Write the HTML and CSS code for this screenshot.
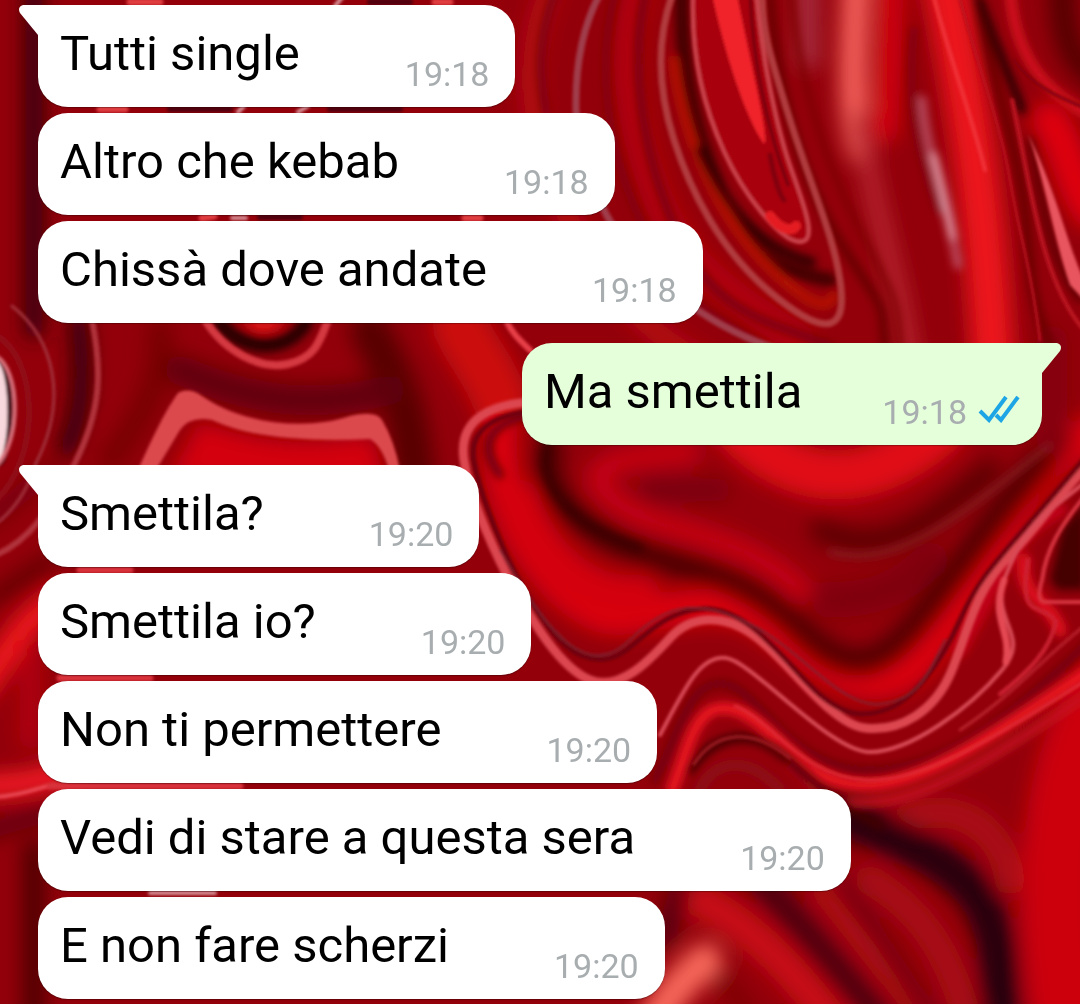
FILE: index.html
```html
<!DOCTYPE html>
<html lang="it">
<head>
<meta charset="utf-8">
<meta name="viewport" content="width=device-width, initial-scale=1">
<title>Chat</title>
<link rel="stylesheet" href="styles.css">
</head>
<body>
<svg class="wallpaper" viewBox="0 0 1080 1004" preserveAspectRatio="xMidYMid slice" aria-hidden="true">
  <defs>
    <filter id="soft" x="-20%" y="-20%" width="140%" height="140%"><feGaussianBlur stdDeviation="10"/></filter>
    <filter id="mid" x="-20%" y="-20%" width="140%" height="140%"><feGaussianBlur stdDeviation="4"/></filter>
    <filter id="fine" x="-20%" y="-20%" width="140%" height="140%"><feGaussianBlur stdDeviation="1.5"/></filter>
  </defs>
  <rect width="1080" height="1004" fill="#93000a"/>

  <!-- broad folds -->
  <g filter="url(#soft)" fill="none" stroke-linecap="round">
    <path d="M550 -10C520 60 530 130 560 200S640 330 700 360" stroke="#b80812" stroke-width="20"/>
    <path d="M640 -10C620 50 630 120 655 190S720 290 800 340" stroke="#b40010" stroke-width="30"/>
    <path d="M34 -10V330" stroke="#2c000a" stroke-width="18"/>
    <path d="M808 -20V60" stroke="#a83044" stroke-width="20"/>
    <path d="M858 -40C852 60 850 110 862 150" stroke="#f4605a" stroke-width="28"/>
    <path d="M892 -40C890 60 888 90 886 130" stroke="#d40008" stroke-width="24"/>
    <path d="M862 120C870 210 900 270 912 380" stroke="#b82832" stroke-width="18"/>
    <path d="M940 -40C965 90 985 180 995 400" stroke="#ec141c" stroke-width="42"/>
    <path d="M1062 -30C1060 40 1070 70 1120 90" stroke="#520006" stroke-width="26"/>
    <path d="M1050 120C1070 150 1070 180 1090 210" stroke="#e00008" stroke-width="36"/>
    <path d="M78 320C84 370 84 410 66 450" stroke="#24000c" stroke-width="16"/>
    <path d="M160 330C165 380 140 420 110 460" stroke="#780006" stroke-width="26"/>
    <path d="M370 330C390 370 410 400 415 480" stroke="#580006" stroke-width="40"/>
    <path d="M180 370C250 400 310 410 390 390" stroke="#600008" stroke-width="30"/>
    <path d="M460 325C470 350 490 370 500 400" stroke="#cc080e" stroke-width="56"/>
    <path d="M168 480L200 422C260 444 310 446 372 436L388 490Z" fill="#d4000c"/>
    <path d="M500 430C495 530 560 600 600 615S710 580 770 625S850 690 890 680S960 600 1010 520S1060 460 1110 420" stroke="#dc040c" stroke-width="34"/>
    <path d="M520 500C540 560 590 600 640 595" stroke="#d4040c" stroke-width="40"/>
    <path d="M550 445C535 500 590 535 650 555S750 580 800 630S880 670 920 620S1000 510 1060 440" stroke="#4a0004" stroke-width="26"/>
    <path d="M690 452C590 458 580 475 620 505S740 530 800 590" stroke="#c80414" stroke-width="22"/>
    <path d="M650 490H720" stroke="#780008" stroke-width="22"/>
    <path d="M740 430C800 490 870 490 940 430" stroke="#e00812" stroke-width="50"/>
    <path d="M820 530C880 560 930 525 990 470" stroke="#580004" stroke-width="22"/>
    <path d="M830 600C870 600 900 590 930 560" stroke="#80000a" stroke-width="36"/>
    <path d="M1120 680C1050 760 1050 920 1075 1040" stroke="#cc000c" stroke-width="76"/>
    <path d="M900 820C950 800 1000 820 1010 880" stroke="#aa1018" stroke-width="30"/>
    <path d="M840 815C900 840 965 865 985 910S995 970 1005 1040" stroke="#28000a" stroke-width="38"/>
    <path d="M870 880C920 910 950 950 970 1030" stroke="#a80814" stroke-width="30"/>
    <path d="M740 860C790 910 830 960 890 1030" stroke="#4c0010" stroke-width="26"/>
    <path d="M820 890L930 1030" stroke="#b00812" stroke-width="20"/>
    <path d="M845 885L940 1030" stroke="#680008" stroke-width="14"/>
    <path d="M700 900C760 930 800 980 840 1030" stroke="#c80c18" stroke-width="34"/>
    <path d="M700 960C725 980 745 1000 760 1040" stroke="#7a0006" stroke-width="16"/>
    <path d="M650 1030C670 990 685 980 705 960" stroke="#f8685a" stroke-width="34"/>
    <path d="M680 890L664 940" stroke="#500008" stroke-width="20"/>
    <path d="M-20 690C10 650 20 620 60 600" stroke="#f0161e" stroke-width="26"/>
    <path d="M-10 520L50 470" stroke="#740010" stroke-width="18"/>
    <path d="M-10 600L50 560" stroke="#600006" stroke-width="16"/>
    <path d="M30 650V740" stroke="#b4000a" stroke-width="20"/>
    <path d="M-20 786C20 786 40 780 80 770" stroke="#f81c26" stroke-width="22"/>
    <path d="M-20 834L60 810" stroke="#600008" stroke-width="18"/>
    <path d="M34 850V1030" stroke="#4c0006" stroke-width="22"/>
    <path d="M1052 340V440" stroke="#840008" stroke-width="30"/>
  </g>

  <!-- medium folds -->
  <g filter="url(#mid)" fill="none" stroke-linecap="round">
    <path d="M556 -10C536 40 540 80 546 112" stroke="#7a0010" stroke-width="8"/>
    <path d="M616 -10C596 60 605 150 645 230S710 310 760 345" stroke="#80000a" stroke-width="8"/>
    <path d="M646 -10C630 60 640 150 676 230S760 320 830 345" stroke="#76000a" stroke-width="8"/>
    <path d="M682 -10C680 60 690 120 720 190S780 270 830 280" stroke="#420006" stroke-width="14"/>
    <path d="M674 60C684 140 720 220 770 268S830 305 834 296" stroke="#b81404" stroke-width="9"/>
    <path d="M700 150C725 205 760 250 812 262" stroke="#2a0006" stroke-width="9"/>
    <path d="M770 -10C775 80 800 180 845 250S880 300 885 345" stroke="#680006" stroke-width="9"/>
    <path d="M790 -10C800 80 820 150 860 230S896 300 900 345" stroke="#7c0008" stroke-width="6"/>
    <path d="M914 30C906 110 920 160 938 210" stroke="#80000c" stroke-width="8"/>
    <path d="M922 100C926 150 944 190 958 265" stroke="#b84a5c" stroke-width="9"/>
    <path d="M934 156C942 186 950 220 953 236" stroke="#e098a4" stroke-width="7"/>
    <path d="M978 -10C986 60 1012 130 1022 190S1026 290 1050 345" stroke="#6a0006" stroke-width="10"/>
    <path d="M980 0C1000 60 1018 95 1022 110" stroke="#200004" stroke-width="8"/>
    <path d="M1030 140C1044 210 1050 260 1080 300" stroke="#500006" stroke-width="6"/>
    <path d="M1010 -10C1014 50 1040 90 1090 115" stroke="#dc1420" stroke-width="9"/>
    <path d="M220 323C240 350 285 356 306 323" stroke="#260006" stroke-width="14"/>
    <path d="M240 320Q264 344 288 320Z" fill="#e01414"/>
    <path d="M500 475C478 445 488 424 530 414" stroke="#600008" stroke-width="8"/>
    <path d="M548 445C536 490 580 530 640 548" stroke="#380004" stroke-width="8"/>
    <path d="M830 552C900 570 960 515 1050 445" stroke="#8c2028" stroke-width="5"/>
    <path d="M1085 500L1062 530L1050 580L1058 590H1085Z" fill="#440006"/>
    <path d="M960 650C975 620 990 595 1000 570S1040 520 1060 510" stroke="#c00414" stroke-width="14"/>
    <path d="M1024 560C1020 600 1050 600 1060 630" stroke="#dc101c" stroke-width="14"/>
    <path d="M1090 640C1030 700 950 770 870 770S760 690 725 684S680 730 655 780" stroke="#700008" stroke-width="8"/>
    <path d="M1090 670C1010 722 930 785 865 785S775 722 735 710S690 745 672 790" stroke="#f01824" stroke-width="11"/>
    <path d="M1100 686C1020 740 930 802 870 802S820 785 790 765" stroke="#c81822" stroke-width="8"/>
    <path d="M690 770C715 732 752 730 780 752S830 800 880 826" stroke="#400006" stroke-width="10"/>
    <path d="M700 790C715 758 750 756 780 790" stroke="#8c0818" stroke-width="12"/>
  </g>

  <!-- thin highlights -->
  <g filter="url(#fine)" fill="none" stroke-linecap="round">
    <path d="M602 -10C585 20 575 60 576 110C580 160 600 210 622 240S700 325 780 350" stroke="#a03c4c" stroke-width="7"/>
    <path d="M674 -10C655 40 658 90 674 140S720 250 770 292S846 336 841 288S812 190 790 120S762 30 762 -10" stroke="#b03a3c" stroke-width="7"/>
    <path d="M693 -10C690 60 705 110 724 152S780 242 800 242S802 200 790 165S762 60 756 -10Z" fill="#a8040e" stroke="#cc444e" stroke-width="4"/>
    <path d="M711 -10C724 50 744 115 764 144C770 140 752 70 736 -10Z" fill="#f0202a"/>
    <path d="M750 -10C752 60 768 130 788 185" stroke="#700008" stroke-width="3"/>
    <path d="M770 216C780 230 792 232 796 226" stroke="#e41c24" stroke-width="10"/>
    <path d="M770 155C774 180 782 200 784 200" stroke="#800010" stroke-width="5"/>
    <path d="M932 -10C950 60 970 110 985 170" stroke="#f03038" stroke-width="4"/>
    <path d="M958 -10C975 60 1000 120 1010 180S1030 260 1040 340" stroke="#b8101c" stroke-width="3"/>
    <path d="M1028 134C1045 180 1054 240 1070 285L1084 300V280C1068 246 1056 190 1028 134Z" fill="#e8545e"/>
    <path d="M1012 100C1030 180 1040 280 1084 330" stroke="#bc1420" stroke-width="4"/>
    <path d="M1014 60C1030 85 1060 98 1090 110" stroke="#800008" stroke-width="3"/>

    <ellipse cx="-2" cy="412" rx="12" ry="52" fill="#f8d8dc" stroke="#3c0814" stroke-width="5"/>
    <path d="M-4 356C20 370 22 440 -4 466" stroke="#d8707a" stroke-width="4"/>
    <path d="M-4 335C40 360 40 460 -4 500" stroke="#900c18" stroke-width="6"/>
    <path d="M12 306C55 340 68 400 36 463C28 490 14 510 -4 524" stroke="#a0303a" stroke-width="3"/>
    <path d="M92 320C102 370 102 410 74 465C50 510 30 540 -4 555" stroke="#b0303a" stroke-width="6"/>
    <path d="M205 320C225 352 260 370 288 364S320 340 328 320" stroke="#d43840" stroke-width="8"/>
    <path d="M138 470C155 432 166 410 178 393Q189 387 202 396C245 426 310 430 350 416Q376 410 382 420Q394 440 400 470L389 470Q382 446 370 439C310 442 250 438 212 420Q190 416 180 430L156 470Z" fill="#dc484e"/>
    <path d="M506 320C512 334 522 342 530 350" stroke="#e84048" stroke-width="6"/>
    <path d="M540 402C490 402 458 420 464 460S498 560 515 590S560 668 590 680S650 660 670 638S722 612 755 636S830 724 865 728S935 712 952 670S975 590 1010 555S1055 495 1090 465" stroke="#dc4650" stroke-width="9"/>
    <path d="M540 412C495 412 468 430 474 462S505 560 530 600S575 662 605 659S650 614 700 609S790 670 820 695S870 716 890 708S938 670 960 620S1000 560 1090 452" stroke="#70040e" stroke-width="5"/>
    <path d="M500 550C550 640 590 680 630 640S700 600 750 624S840 708 880 704S930 670 945 640" stroke="#802430" stroke-width="2"/>
    <path d="M660 735C685 688 700 655 726 658S830 752 870 752S970 708 1002 670S985 622 1008 570S1040 520 1090 478" stroke="#d84c56" stroke-width="4"/>
    <path d="M1006 662C1012 630 990 620 1004 580" stroke="#e44852" stroke-width="7"/>
    <path d="M1090 602H1044Q1036 600 1042 580C1046 550 1060 525 1090 490" stroke="#d83440" stroke-width="4"/>
    <path d="M1028 560C1018 625 1042 600 1056 622C1050 650 1030 670 1000 694" stroke="#cc2430" stroke-width="4"/>
    <path d="M1090 622C1050 650 1020 690 960 730" stroke="#b8202c" stroke-width="3"/>
    <path d="M1090 678C1020 720 930 784 865 780S775 722 735 706" stroke="#e02c36" stroke-width="3"/>
    <path d="M694 764C715 732 750 726 790 758" stroke="#a01c24" stroke-width="3"/>
    <path d="M-4 797C20 796 38 788 54 784" stroke="#e84450" stroke-width="4"/>

    <path d="M130 2H160M435 2H450M100 109H125M202 218L214 216M465 218H480" stroke="#e03c40" stroke-width="7"/>
    <path d="M335 6L345 -6M298 112L308 106M238 112L244 106M232 218H246M150 893H215" stroke="#d8949a" stroke-width="4"/>
    <path d="M170 109H230M260 217H300M370 2H410M330 109H400" stroke="#500008" stroke-width="6"/>
    <path d="M60 678H150M50 786H240M80 570H130" stroke="#d8303a" stroke-width="7"/>
  </g>
</svg>

<main class="chat">
  <ol class="group">
    <li class="bubble first">
      <svg class="tail" viewBox="0 0 20 30" aria-hidden="true"><path d="M20 0H4Q-2 2 1 8L19 30H20Z"/></svg>
      <p class="text">Tutti single</p><time class="time">19:18</time>
    </li>
    <li class="bubble"><p class="text">Altro che kebab</p><time class="time">19:18</time></li>
    <li class="bubble"><p class="text">Chissà dove andate</p><time class="time">19:18</time></li>
  </ol>
  <ol class="group sent">
    <li class="bubble first">
      <svg class="tail" viewBox="0 0 20 30" aria-hidden="true"><path d="M0 0H16Q22 2 19 8L1 30H0Z"/></svg>
      <p class="text">Ma smettila</p><time class="time">19:18</time>
      <svg class="ticks" viewBox="0 0 42 28" role="img" aria-label="Letto"><path d="M2 16L11 25L28 2M18 20L23 25L40 2"/></svg>
    </li>
  </ol>
  <ol class="group">
    <li class="bubble first">
      <svg class="tail" viewBox="0 0 20 30" aria-hidden="true"><path d="M20 0H4Q-2 2 1 8L19 30H20Z"/></svg>
      <p class="text">Smettila?</p><time class="time">19:20</time>
    </li>
    <li class="bubble"><p class="text">Smettila io?</p><time class="time">19:20</time></li>
    <li class="bubble"><p class="text">Non ti permettere</p><time class="time">19:20</time></li>
    <li class="bubble"><p class="text">Vedi di stare a questa sera</p><time class="time">19:20</time></li>
    <li class="bubble"><p class="text">E non fare scherzi</p><time class="time">19:20</time></li>
  </ol>
</main>
</body>
</html>
```
FILE: styles.css
```css
* {
  box-sizing: border-box;
}

body {
  margin: 0;
  background: #93000a;
  font-family: Roboto, "Liberation Sans", sans-serif;
}

.wallpaper {
  position: fixed;
  inset: 0;
  z-index: -1;
  width: 100%;
  height: 100%;
}

.chat {
  display: flex;
  flex-direction: column;
  gap: 20px;
  padding: 5px 38px;
}

.group {
  display: flex;
  flex-direction: column;
  align-items: flex-start;
  gap: 6px;
  margin: 0;
  padding: 0;
  list-style: none;
}

.bubble {
  position: relative;
  display: flex;
  align-items: flex-end;
  padding: 20px 26px 14px 22px;
  border-radius: 30px;
  background: #fff;
  box-shadow: 0 1px 1px rgba(0, 0, 0, 0.3);
}

.first {
  border-top-left-radius: 0;
}

.text {
  margin: 0 105px 10px 0;
  color: #000;
  font-size: 49px;
  line-height: 58px;
}

.time {
  color: #a8adaf;
  font-size: 34px;
  line-height: 38px;
}

.tail {
  position: absolute;
  top: 0;
  left: -19px;
  width: 20px;
  height: 30px;
  fill: #fff;
}

.sent {
  align-items: flex-end;
}

.sent .bubble {
  padding-right: 22px;
  background: #e5ffdb;
}

.sent .first {
  border-top-left-radius: 30px;
  border-top-right-radius: 0;
}

.sent .text {
  margin-right: 80px;
}

.sent .tail {
  right: -19px;
  left: auto;
  fill: #e5ffdb;
}

.ticks {
  width: 42px;
  height: 28px;
  margin: 0 0 8px 11px;
  fill: none;
  stroke: #1ea5e5;
  stroke-width: 4;
}
```
